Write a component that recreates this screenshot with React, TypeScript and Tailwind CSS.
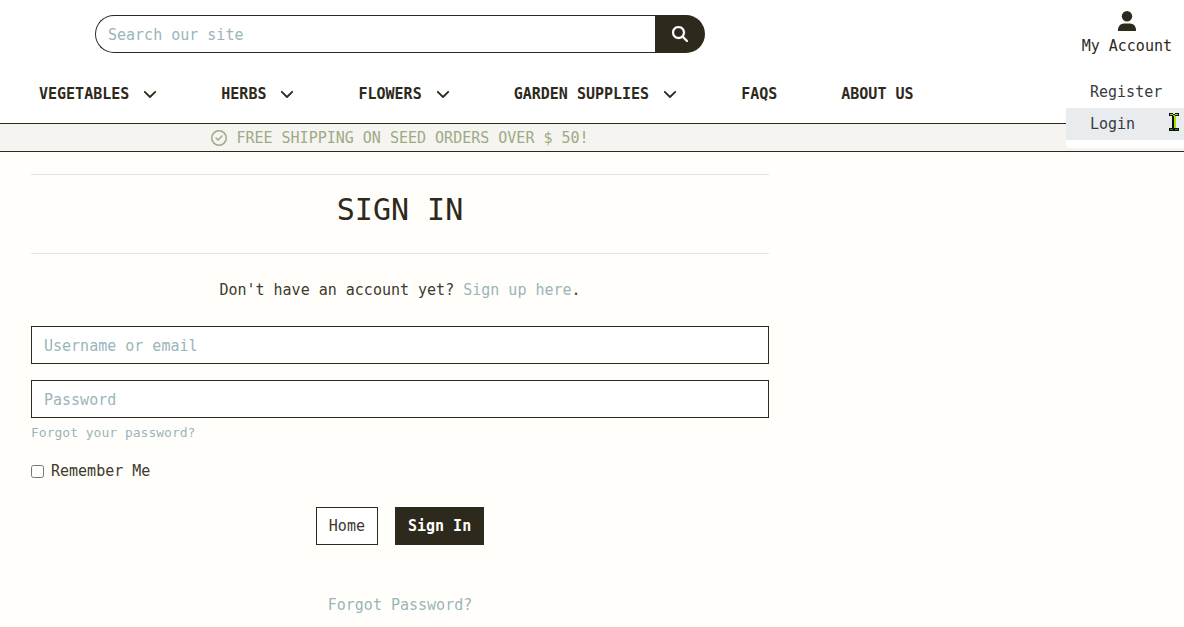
import React from "react";
import { FaMagnifyingGlass, FaRegCircleCheck } from "react-icons/fa6";

const navItems = [
  { label: "VEGETABLES", menu: true },
  { label: "HERBS", menu: true },
  { label: "FLOWERS", menu: true },
  { label: "GARDEN SUPPLIES", menu: true },
  { label: "FAQS", menu: false },
  { label: "ABOUT US", menu: false },
];

function Chevron() {
  return (
    <svg className="size-3.5" viewBox="0 0 14 14" fill="none" stroke="currentColor" strokeWidth="1.8" strokeLinecap="round" strokeLinejoin="round" aria-hidden="true">
      <path d="M1.8 4.8 7 10l5.2-5.2" />
    </svg>
  );
}

function UserIcon() {
  return (
    <svg className="h-5 w-[18px]" viewBox="0 0 18 20" fill="currentColor" aria-hidden="true">
      <circle cx="9" cy="5.3" r="5.2" />
      <path d="M0 20v-1.2C0 15.200 2.700 12.400 6 12.400h6c3.300 0 6 2.800 6 6.400V20z" />
    </svg>
  );
}

function TextCursor() {
  return (
    <svg className="pointer-events-none absolute top-1 right-1 h-5 w-3" viewBox="0 0 12 20" aria-hidden="true">
      <path d="M1 1h4v1h2V1h4v3H8v12h3v3H1v-3h3V4H1z" fill="#111" />
      <path d="M2 2h3v1H2zM7 2h3v1H7zM5 3h2v1H5zM6 4h2v12H6z" fill="#a8e000" />
      <path d="M2 17h3v1H2zM7 17h3v1H7z" fill="#1b8a1b" />
    </svg>
  );
}

function Header() {
  return (
    <header className="relative bg-white">
      <div className="flex h-[123px] items-start justify-between">
        <div className="w-full max-w-[940px]">
          <form className="ml-[95px] mt-[15px] flex h-[38px] max-w-[610px]" role="search" onSubmit={(e) => e.preventDefault()}>
            <input type="search" aria-label="Search our site" placeholder="Search our site" className="min-w-0 flex-1 rounded-l-full border border-r-0 border-[#2d291c] bg-white px-3 pt-0.5 outline-none placeholder:text-[#9ab5b9]" />
            <button type="submit" aria-label="Search" className="flex w-[50px] items-center justify-center rounded-r-full bg-[#2d291c] text-white">
              <FaMagnifyingGlass className="size-4" stroke="currentColor" strokeWidth={8} />
            </button>
          </form>
          <nav aria-label="Main" className="mt-[29px] flex gap-16 pl-[39px] font-bold whitespace-nowrap">
            {navItems.map((item) =>
              item.menu ? (
                <button key={item.label} type="button" aria-haspopup="menu" className="flex items-center gap-3.5">
                  {item.label}
                  <Chevron />
                </button>
              ) : (
                <a key={item.label} href="#">{item.label}</a>
              )
            )}
          </nav>
        </div>
        <button type="button" aria-haspopup="menu" aria-expanded="true" className="flex shrink-0 flex-col items-center pt-[11px] pr-3 whitespace-nowrap">
          <UserIcon />
          <span className="mt-[3px]">My Account</span>
        </button>
      </div>
      <div className="flex h-[29px] border-y border-[#2d291c] bg-[#f5f4f0] text-[#9cab86]">
        <p className="flex w-full max-w-[800px] items-center justify-center gap-[9px]">
          <FaRegCircleCheck className="size-4" />
          FREE SHIPPING ON SEED ORDERS OVER $ 50!
        </p>
      </div>
      <div className="absolute top-[68px] right-0 w-[118px] rounded-bl bg-white py-2 text-[#373b3f]">
        <a href="#" className="block px-6 py-1">Register</a>
        <a href="#" className="relative block bg-[#e9ecef] px-6 py-1">
          Login
          <TextCursor />
        </a>
      </div>
    </header>
  );
}

const fieldClass = "block h-[38px] w-full border border-[#2d291c] bg-white px-3 pt-0.5 outline-none placeholder:text-[#9ab5b9]";

export default function App() {
  return (
    <div className="min-h-screen bg-[#fffefa] font-['DejaVu_Sans_Mono','Liberation_Mono',monospace] text-[15px] leading-6 text-[#2d291c]">
      <Header />
      <main className="max-w-[800px] px-[31px] pt-[22px]">
        <h1 className="border-y border-[#e3e2de] pt-4 pb-6 text-center text-[30px] leading-[38px]">SIGN IN</h1>
        <p className="mt-6 text-center text-[#3e3a2e]">
          Don't have an account yet? <a href="#" className="text-[#9ab5b9]">Sign up here</a>.
        </p>
        <form className="mt-6" onSubmit={(e) => e.preventDefault()}>
          <input type="text" aria-label="Username or email" placeholder="Username or email" className={fieldClass} />
          <input type="password" aria-label="Password" placeholder="Password" className={`mt-4 ${fieldClass}`} />
          <a href="#" className="mt-1 block w-fit text-[13px] leading-[21px] text-[#9ab5b9]">Forgot your password?</a>
          <label className="mt-4 flex w-fit items-center gap-[7px] text-[#3e3a2e]">
            <input type="checkbox" className="size-[13px]" />
            Remember Me
          </label>
          <div className="mt-6 flex justify-center gap-[17px]">
            <a href="#" className="flex h-[38px] items-center border border-[#2d291c] bg-white px-3 text-[#3e3a2e]">Home</a>
            <button type="submit" className="h-[38px] border border-[#2d291c] bg-[#2d291c] px-3 font-bold text-[#fffefa]">Sign In</button>
          </div>
        </form>
        <p className="mt-12 text-center"><a href="#" className="text-[#9ab5b9]">Forgot Password?</a></p>
      </main>
    </div>
  );
}
